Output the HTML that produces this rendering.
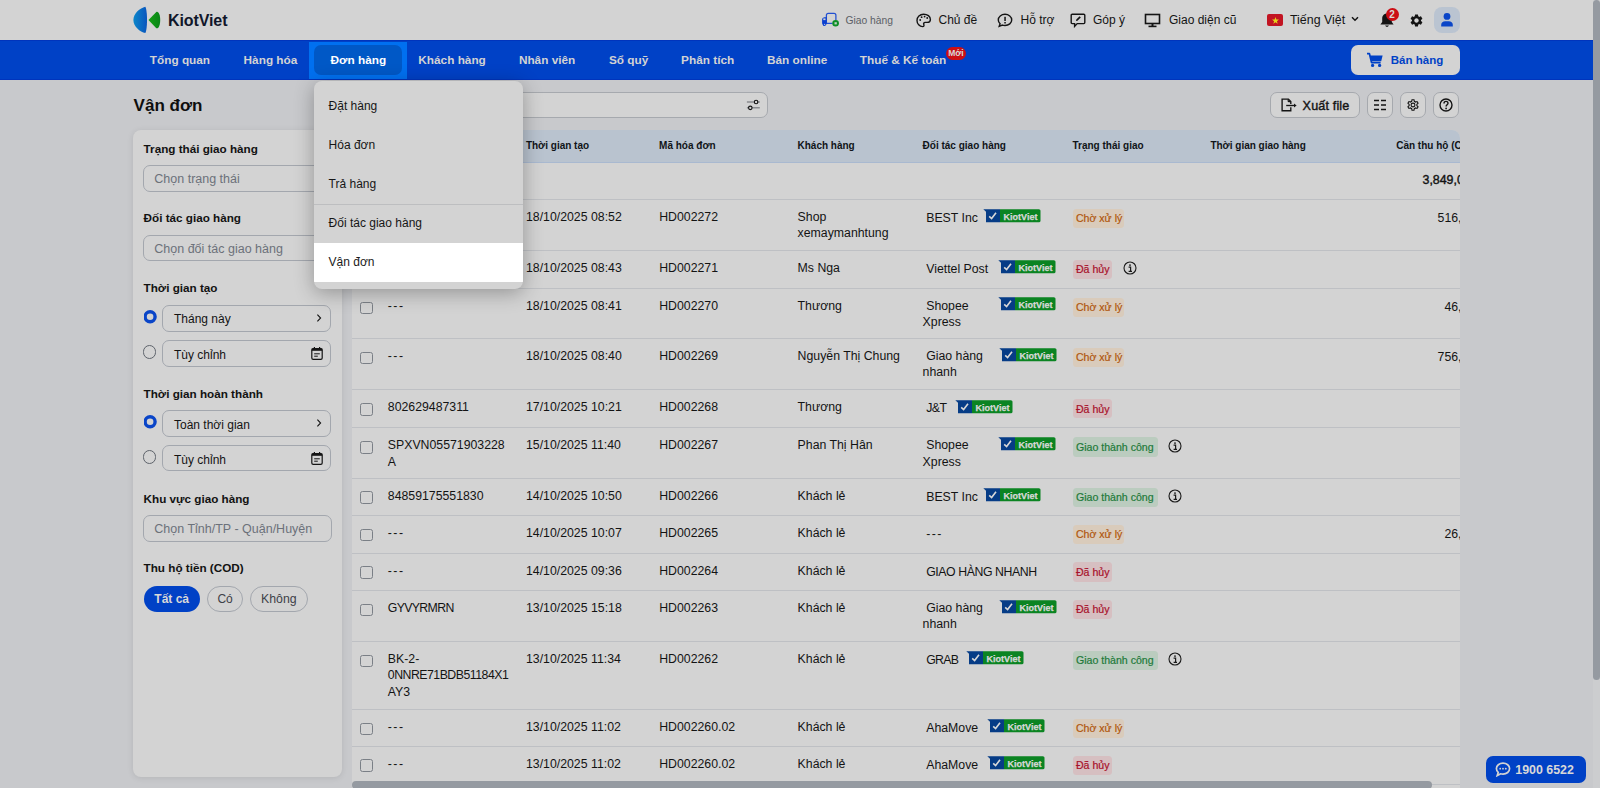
<!DOCTYPE html>
<html lang="vi">
<head>
<meta charset="utf-8">
<title>KiotViet - Vận đơn</title>
<style>
*{box-sizing:border-box;margin:0;padding:0}
html,body{width:1600px;height:788px;overflow:hidden}
body{position:relative;background:#C8C9CC;font-family:"Liberation Sans",sans-serif;color:#141414;font-size:12px}
.abs{position:absolute}
.t{position:absolute;white-space:nowrap;line-height:1}
/* header */
#hdr{position:absolute;left:0;top:0;width:1593px;height:40px;background:#D3D3D3}
#nav{position:absolute;left:0;top:40px;width:1593px;height:40px;background:#0041C6}
.nv{position:absolute;top:55px;font-weight:bold;font-size:11.8px;color:#D3D3D3;white-space:nowrap;line-height:1}
#vscroll{position:absolute;left:1593px;top:0;width:7px;height:788px;background:#CCCDCF}
#vthumb{position:absolute;left:1593px;top:0;width:7px;height:680px;background:#959AA1;border-radius:4px}
</style>
</head>
<body>
<div id="vscroll"></div>
<div id="vthumb"></div>

<!-- HEADER -->
<div id="hdr">
  <svg class="abs" style="left:130px;top:4px" width="34" height="32" viewBox="130 4 34 32">
    <defs><linearGradient id="lgb" x1="0" x2="1" y1="0" y2="0"><stop offset="0" stop-color="#0B86C9"/><stop offset="1" stop-color="#0A55BE"/></linearGradient>
    <linearGradient id="lgg" x1="0" x2="1"><stop offset="0" stop-color="#14A014"/><stop offset="1" stop-color="#0A8418"/></linearGradient></defs>
    <path d="M145.3,6.8 C140,8 133.4,13.5 133.4,20 C133.4,26.5 140,32 145.3,33.1 C147.6,29.5 147.6,10.5 145.3,6.8 Z" fill="url(#lgb)"/>
    <path d="M148.5,20 L156.3,12 C158.6,11 160.2,15 160.2,20 C160.2,25 158.6,29 156.3,28.2 Z" fill="url(#lgg)"/>
  </svg>
  <div class="t" style="left:168px;top:12.8px;font-size:16px;font-weight:bold;color:#10162A;letter-spacing:-0.1px">KiotViet</div>

  <!-- Giao hang -->
  <svg class="abs" style="left:820px;top:12px" width="21" height="16" viewBox="0 0 21 16">
    <path d="M12.5,11.4 L6.4,11.4 L6.4,3.3 Q6.4,1.4 8.3,1.4 L14,1.4 Q15.9,1.4 15.9,3.3 L15.9,8.4" fill="none" stroke="#2250D0" stroke-width="1.25"/>
    <path d="M6.6,5.2 L4.3,5.2 Q2.1,5.5 2.1,7.6 L2.1,11.2 Q2.1,12.2 3.2,12.4 L6.6,12.4 Z" fill="#0A3FD0"/>
    <rect x="3.3" y="6.4" width="2.2" height="1.7" fill="#D3D3D3"/>
    <circle cx="4.3" cy="12.4" r="1.6" fill="#0A3FD0"/><circle cx="4.6" cy="12.3" r="0.6" fill="#D3D3D3"/>
    <circle cx="15.6" cy="11.3" r="3.3" fill="#0E8E26"/>
    <rect x="14.5" y="10.2" width="2.3" height="2.2" fill="#BFD3C2"/>
  </svg>
  <div class="t" style="left:845.5px;top:15.6px;font-size:10.3px;color:#5C5F66">Giao hàng</div>

  <!-- Chu de -->
  <svg class="abs" style="left:916px;top:13px" width="16" height="15" viewBox="0 0 16 15">
    <path d="M7.6,1.2 C3.8,1.2 1,4 1,7.4 C1,10.8 3.6,13.6 6.6,13.6 C8,13.6 8.2,12.6 7.8,11.6 C7.3,10.4 7.8,9.4 9.2,9.4 L11.2,9.4 C13.2,9.4 14.4,8.2 14.4,6.4 C14.4,3.4 11.4,1.2 7.6,1.2 Z" fill="none" stroke="#141414" stroke-width="1.4"/>
    <circle cx="4.2" cy="7" r="0.9" fill="#141414"/><circle cx="5.6" cy="4.2" r="0.9" fill="#141414"/><circle cx="8.6" cy="3.6" r="0.9" fill="#141414"/><circle cx="11.2" cy="5" r="0.9" fill="#141414"/>
  </svg>
  <div class="t" style="left:938.5px;top:14.4px;font-size:12px;color:#141414">Chủ đề</div>

  <!-- Ho tro -->
  <svg class="abs" style="left:997px;top:13px" width="16" height="15" viewBox="0 0 16 15">
    <path d="M8,1.3 C4.2,1.3 1.3,3.8 1.3,6.9 C1.3,8.4 2,9.7 3.1,10.7 L2.2,13.4 L5.4,12.1 C6.2,12.4 7.1,12.5 8,12.5 C11.8,12.5 14.7,10 14.7,6.9 C14.7,3.8 11.8,1.3 8,1.3 Z" fill="none" stroke="#141414" stroke-width="1.4"/>
    <rect x="7.3" y="3.8" width="1.5" height="4.2" fill="#141414"/><rect x="7.3" y="9" width="1.5" height="1.5" fill="#141414"/>
  </svg>
  <div class="t" style="left:1020.5px;top:14.4px;font-size:12px;color:#141414">Hỗ trợ</div>

  <!-- Gop y -->
  <svg class="abs" style="left:1070px;top:13px" width="16" height="15" viewBox="0 0 16 15">
    <path d="M2.2,1.2 L13.8,1.2 Q14.8,1.2 14.8,2.2 L14.8,9.6 Q14.8,10.6 13.8,10.6 L7.2,10.6 L4.6,13.4 L4.6,10.6 L2.2,10.6 Q1.2,10.6 1.2,9.6 L1.2,2.2 Q1.2,1.2 2.2,1.2 Z" fill="none" stroke="#141414" stroke-width="1.4"/>
    <path d="M6,8 L6.3,6.6 L9.6,3.3 L10.8,4.5 L7.5,7.8 Z" fill="#141414"/>
  </svg>
  <div class="t" style="left:1093px;top:14.4px;font-size:12px;color:#141414">Góp ý</div>

  <!-- Giao dien cu -->
  <svg class="abs" style="left:1144px;top:13px" width="17" height="15" viewBox="0 0 17 15">
    <rect x="1.5" y="1.5" width="14" height="9" fill="none" stroke="#141414" stroke-width="1.6"/>
    <rect x="7.5" y="10.5" width="2" height="2.5" fill="#141414"/>
    <rect x="4.5" y="12.6" width="8" height="1.6" fill="#141414"/>
  </svg>
  <div class="t" style="left:1169px;top:14.4px;font-size:12px;color:#141414">Giao diện cũ</div>

  <!-- flag -->
  <div class="abs" style="left:1267px;top:14px;width:16px;height:11.5px;background:#C21422;border-radius:2px"></div>
  <svg class="abs" style="left:1270px;top:14.5px" width="11" height="11" viewBox="0 0 11 11"><path d="M5.5,2 L6.4,4.6 L9,4.6 L6.9,6.2 L7.7,8.8 L5.5,7.2 L3.3,8.8 L4.1,6.2 L2,4.6 L4.6,4.6 Z" fill="#E6D21A"/></svg>
  <div class="t" style="left:1290px;top:14.3px;font-size:12.4px;color:#141414">Tiếng Việt</div>
  <svg class="abs" style="left:1351px;top:16px" width="8" height="6" viewBox="0 0 8 6"><path d="M1,1.2 L4,4.2 L7,1.2" fill="none" stroke="#141414" stroke-width="1.5"/></svg>

  <!-- bell -->
  <svg class="abs" style="left:1379px;top:12px" width="16" height="17" viewBox="0 0 16 17">
    <path d="M8,1.5 C5,1.5 3.2,3.8 3.2,6.6 L3.2,10 L1.4,12.6 L14.6,12.6 L12.8,10 L12.8,6.6 C12.8,3.8 11,1.5 8,1.5 Z" fill="#141414"/>
    <path d="M6,13.6 Q8,16.4 10,13.6 Z" fill="#141414"/>
  </svg>
  <div class="abs" style="left:1385.5px;top:7.8px;width:13px;height:13px;border-radius:50%;background:#CC0E14;color:#D8D8D8;font-size:10px;font-weight:bold;text-align:center;line-height:13px">2</div>

  <!-- gear -->
  <svg class="abs" style="left:1409px;top:12.5px" width="15" height="15" viewBox="0 0 24 24">
    <path fill="#141414" d="M19.14,12.94c0.04-0.3,0.06-0.61,0.06-0.94c0-0.32-0.02-0.64-0.07-0.94l2.03-1.58c0.18-0.14,0.23-0.41,0.12-0.61 l-1.92-3.32c-0.12-0.22-0.37-0.29-0.59-0.22l-2.39,0.96c-0.5-0.38-1.03-0.7-1.62-0.94L14.4,2.81c-0.04-0.24-0.24-0.41-0.48-0.41 h-3.84c-0.24,0-0.43,0.17-0.47,0.41L9.25,5.35C8.66,5.59,8.12,5.92,7.63,6.29L5.24,5.33c-0.22-0.08-0.47,0-0.59,0.22L2.74,8.87 C2.62,9.08,2.66,9.34,2.86,9.48l2.03,1.58C4.84,11.36,4.8,11.69,4.8,12s0.02,0.64,0.07,0.94l-2.03,1.58 c-0.18,0.14-0.23,0.41-0.12,0.61l1.92,3.32c0.12,0.22,0.37,0.29,0.59,0.22l2.39-0.96c0.5,0.38,1.03,0.7,1.62,0.94l0.36,2.54 c0.05,0.24,0.24,0.41,0.48,0.41h3.84c0.24,0,0.44-0.17,0.47-0.41l0.36-2.54c0.59-0.24,1.13-0.56,1.62-0.94l2.39,0.96 c0.22,0.08,0.47,0,0.59-0.22l1.92-3.32c0.12-0.22,0.07-0.47-0.12-0.61L19.14,12.94z M12,15.6c-1.98,0-3.6-1.62-3.6-3.6 s1.62-3.6,3.6-3.6s3.6,1.62,3.6,3.6S13.98,15.6,12,15.6z"/>
  </svg>

  <!-- avatar -->
  <div class="abs" style="left:1433.5px;top:6.5px;width:26.5px;height:26.5px;border-radius:8px;background:#BAC4D1"></div>
  <svg class="abs" style="left:1439px;top:12px" width="16" height="16" viewBox="0 0 16 16">
    <circle cx="8" cy="4.4" r="3.4" fill="#0A45C8"/>
    <path d="M2.2,14.6 L2.2,12.8 C2.2,10.6 4,9.2 6.2,9.2 L9.8,9.2 C12,9.2 13.8,10.6 13.8,12.8 L13.8,14.6 Z" fill="#0A45C8"/>
  </svg>
</div>

<!-- NAV -->
<div id="nav"></div>
<div class="abs" style="left:0;top:40px;width:1593px;height:1px;background:#0034BC"></div>
<div class="abs" style="left:0;top:79px;width:1593px;height:1px;background:#0034BC"></div>
<div class="abs" style="left:309px;top:42px;width:98px;height:37px;background:#0070F0"></div>
<div class="abs" style="left:314px;top:45px;width:88px;height:30px;background:#0058C6;border-radius:7px"></div>
<div class="nv" style="left:149.79999999999998px">Tổng quan</div>
<div class="nv" style="left:243.6px">Hàng hóa</div>
<div class="nv" style="left:418.3px">Khách hàng</div>
<div class="nv" style="left:518.9px">Nhân viên</div>
<div class="nv" style="left:608.9px">Sổ quỹ</div>
<div class="nv" style="left:681.1px">Phân tích</div>
<div class="nv" style="left:767.0px">Bán online</div>
<div class="nv" style="left:859.8000000000001px">Thuế &amp; Kế toán</div>
<div class="nv" style="left:330.6px;color:#FFFFFF">Đơn hàng</div>
<div class="abs" style="left:946px;top:46.5px;width:20px;height:13.5px;border-radius:7px;background:#CC0E14;color:#D8D8D8;font-size:8.5px;font-weight:bold;text-align:center;line-height:13.5px">Mới</div>
<div class="abs" style="left:1351px;top:45px;width:109px;height:30px;border-radius:7px;background:#D3D3D3"></div>
<svg class="abs" style="left:1366px;top:52px" width="18" height="16" viewBox="0 0 18 16">
<path d="M1,1.6 L3.4,1.6 L5.6,10.6 L14.6,10.6" fill="none" stroke="#0041C6" stroke-width="1.8" stroke-linejoin="round"/>
<path d="M4.2,3.6 L16.6,3.6 L15.2,9.2 L5.4,9.2 Z" fill="#0041C6"/>
<circle cx="6.6" cy="13.4" r="1.6" fill="#0041C6"/><circle cx="13.6" cy="13.4" r="1.6" fill="#0041C6"/>
</svg>
<div class="nv" style="left:1390.8px;color:#0041C6;font-size:11.5px">Bán hàng</div>

<!-- TITLE -->
<div class="t" style="left:133.6px;top:96.9px;font-size:17px;font-weight:bold;color:#0E0E0E">Vận đơn</div>

<!-- SEARCH -->
<div class="abs" style="left:352px;top:92px;width:416px;height:26px;border:1px solid #A6A9AE;border-radius:7px;background:#D3D3D3"></div>
<svg class="abs" style="left:745px;top:98px" width="16" height="14" viewBox="0 0 16 14">
<path d="M1.9,4 L14.8,4 M1.9,9.8 L14.8,9.8" stroke="#8A8C90" stroke-width="1.4"/>
<circle cx="11.1" cy="4" r="1.75" fill="#D3D3D3" stroke="#141414" stroke-width="1.15"/>
<circle cx="5.3" cy="9.8" r="1.75" fill="#D3D3D3" stroke="#141414" stroke-width="1.15"/>
</svg>

<!-- TOOLBAR -->
<div class="abs" style="left:1270px;top:92px;width:90px;height:26px;border:1px solid #A6A9AE;border-radius:7px;background:#D3D3D3"></div>
<svg class="abs" style="left:1280px;top:97px" width="18" height="16" viewBox="0 0 18 16">
<path d="M10.8,7 L10.8,4.6 L8.4,2.1 L2.1,2.1 L2.1,13.7 L10.8,13.7 L10.8,10.2" fill="none" stroke="#141414" stroke-width="1.35"/>
<path d="M8.2,2.3 L8.2,3.9 Q8.2,4.6 8.9,4.6 L10.6,4.6" fill="none" stroke="#141414" stroke-width="1.2"/>
<path d="M6.2,8.5 L14.6,8.5" fill="none" stroke="#141414" stroke-width="1.35"/>
<path d="M14,6.5 L16.6,8.5 L14,10.5 Z" fill="#141414"/>
</svg>
<div class="t" style="left:1302.6px;top:99.6px;font-size:12.6px;letter-spacing:0.15px;color:#141414;-webkit-text-stroke:0.4px #141414">Xuất file</div>
<div class="abs" style="left:1367px;top:92px;width:26px;height:26px;border:1px solid #A6A9AE;border-radius:7px;background:#D3D3D3"></div>
<svg class="abs" style="left:1373px;top:98px" width="14" height="14" viewBox="0 0 14 14">
<path d="M1,2.5 L6,2.5 M8,2.5 L13,2.5 M1,7 L6,7 M8,7 L13,7 M1,11.5 L6,11.5 M8,11.5 L13,11.5" stroke="#141414" stroke-width="1.4"/>
</svg>
<div class="abs" style="left:1400px;top:92px;width:26px;height:26px;border:1px solid #A6A9AE;border-radius:7px;background:#D3D3D3"></div>
<svg class="abs" style="left:1406px;top:98px" width="14" height="14" viewBox="0 0 24 24">
<path fill="none" stroke="#141414" stroke-width="1.9" d="M10.3,2.5 L13.7,2.5 L14.3,5.3 C15,5.6 15.7,6 16.3,6.5 L19,5.6 L20.7,8.5 L18.6,10.4 C18.7,11.1 18.7,11.9 18.6,12.6 L20.7,14.5 L19,17.4 L16.3,16.5 C15.7,17 15,17.4 14.3,17.7 L13.7,20.5 L10.3,20.5 L9.7,17.7 C9,17.4 8.3,17 7.7,16.5 L5,17.4 L3.3,14.5 L5.4,12.6 C5.3,11.9 5.3,11.1 5.4,10.4 L3.3,8.5 L5,5.6 L7.7,6.5 C8.3,6 9,5.6 9.7,5.3 Z" transform="translate(0,0.5)"/>
<circle cx="12" cy="12" r="3.3" fill="none" stroke="#141414" stroke-width="1.9"/>
</svg>
<div class="abs" style="left:1433px;top:92px;width:26px;height:26px;border:1px solid #A6A9AE;border-radius:7px;background:#D3D3D3"></div>
<svg class="abs" style="left:1439px;top:98px" width="14" height="14" viewBox="0 0 14 14">
<circle cx="7" cy="7" r="6" fill="none" stroke="#141414" stroke-width="1.4"/>
<path d="M5,5.4 C5,4.1 5.9,3.4 7,3.4 C8.1,3.4 9,4.1 9,5.2 C9,6.6 7.1,6.8 7.1,8.4" fill="none" stroke="#141414" stroke-width="1.4"/>
<circle cx="7.1" cy="10.4" r="0.85" fill="#141414"/>
</svg>

<!-- SIDEBAR -->
<div class="abs" style="left:133px;top:130px;width:209px;height:647px;background:#D3D3D3;border-radius:8px;box-shadow:0 1px 6px rgba(0,0,0,0.10)"></div>
<div class="t" style="left:143.6px;top:143.1px;font-size:11.7px;font-weight:bold;color:#121212">Trạng thái giao hàng</div>
<div class="t" style="left:143.6px;top:212.4px;font-size:11.7px;font-weight:bold;color:#121212">Đối tác giao hàng</div>
<div class="t" style="left:143.6px;top:282.4px;font-size:11.7px;font-weight:bold;color:#121212">Thời gian tạo</div>
<div class="t" style="left:143.6px;top:387.9px;font-size:11.7px;font-weight:bold;color:#121212">Thời gian hoàn thành</div>
<div class="t" style="left:143.6px;top:493.1px;font-size:11.7px;font-weight:bold;color:#121212">Khu vực giao hàng</div>
<div class="t" style="left:143.6px;top:562.0px;font-size:11.7px;font-weight:bold;color:#121212">Thu hộ tiền (COD)</div>
<div class="abs" style="left:143px;top:165px;width:189px;height:26.6px;border:1px solid #A3A7AE;border-radius:7px;background:#D3D3D3"></div>
<div class="t" style="left:154.3px;top:173.19px;font-size:12.5px;color:#6C717A">Chọn trạng thái</div>
<div class="abs" style="left:143px;top:235px;width:189px;height:26.4px;border:1px solid #A3A7AE;border-radius:7px;background:#D3D3D3"></div>
<div class="t" style="left:154.3px;top:242.69px;font-size:12.5px;color:#6C717A">Chọn đối tác giao hàng</div>
<div class="abs" style="left:143px;top:515.3px;width:189px;height:26.3px;border:1px solid #A3A7AE;border-radius:7px;background:#D3D3D3"></div>
<div class="t" style="left:154.3px;top:523.09px;font-size:12.5px;color:#6C717A">Chọn Tỉnh/TP - Quận/Huyện</div>
<svg class="abs" style="left:143.5px;top:310.15px" width="14" height="14" viewBox="0 0 14 14"><circle cx="6.1" cy="6.8" r="5.0" fill="#D3D3D3" stroke="#0A45C8" stroke-width="3.4"/></svg>
<div class="abs" style="left:162.4px;top:305px;width:169px;height:26.5px;border:1px solid #A3A7AE;border-radius:7px;background:#D3D3D3"></div>
<div class="t" style="left:174px;top:313.34px;font-size:12px;color:#141414">Tháng này</div>
<svg class="abs" style="left:315px;top:313.1px" width="8" height="10" viewBox="0 0 8 10"><path d="M2.4,1.6 L5.6,5 L2.4,8.4" fill="none" stroke="#141414" stroke-width="1.1"/></svg>
<div class="abs" style="left:142.8px;top:345.45px;width:13.6px;height:13.6px;border-radius:50%;border:1.2px solid #5E636B;background:#D3D3D3"></div>
<div class="abs" style="left:162.4px;top:340.4px;width:169px;height:26.3px;border:1px solid #A3A7AE;border-radius:7px;background:#D3D3D3"></div>
<div class="t" style="left:174px;top:348.84px;font-size:12px;color:#141414">Tùy chỉnh</div>
<svg class="abs" style="left:310px;top:345.7px" width="14" height="15" viewBox="0 0 14 15"><rect x="1.8" y="2.6" width="10.4" height="10.8" rx="1.4" fill="none" stroke="#141414" stroke-width="1.2"/><rect x="1.8" y="2.6" width="10.4" height="2.2" fill="#141414"/><path d="M4.4,0.9 L4.4,3.2 M9.6,0.9 L9.6,3.2" stroke="#141414" stroke-width="1.2"/><path d="M4.2,7.8 L9.8,7.8 M4.2,10.2 L7.8,10.2" stroke="#141414" stroke-width="1"/></svg>
<svg class="abs" style="left:143.5px;top:415.45px" width="14" height="14" viewBox="0 0 14 14"><circle cx="6.1" cy="6.8" r="5.0" fill="#D3D3D3" stroke="#0A45C8" stroke-width="3.4"/></svg>
<div class="abs" style="left:162.4px;top:410.4px;width:169px;height:26.3px;border:1px solid #A3A7AE;border-radius:7px;background:#D3D3D3"></div>
<div class="t" style="left:174px;top:418.64px;font-size:12px;color:#141414">Toàn thời gian</div>
<svg class="abs" style="left:315px;top:418.3px" width="8" height="10" viewBox="0 0 8 10"><path d="M2.4,1.6 L5.6,5 L2.4,8.4" fill="none" stroke="#141414" stroke-width="1.1"/></svg>
<div class="abs" style="left:142.8px;top:450.25px;width:13.6px;height:13.6px;border-radius:50%;border:1.2px solid #5E636B;background:#D3D3D3"></div>
<div class="abs" style="left:162.4px;top:445.3px;width:169px;height:26.1px;border:1px solid #A3A7AE;border-radius:7px;background:#D3D3D3"></div>
<div class="t" style="left:174px;top:453.84px;font-size:12px;color:#141414">Tùy chỉnh</div>
<svg class="abs" style="left:310px;top:450.6px" width="14" height="15" viewBox="0 0 14 15"><rect x="1.8" y="2.6" width="10.4" height="10.8" rx="1.4" fill="none" stroke="#141414" stroke-width="1.2"/><rect x="1.8" y="2.6" width="10.4" height="2.2" fill="#141414"/><path d="M4.4,0.9 L4.4,3.2 M9.6,0.9 L9.6,3.2" stroke="#141414" stroke-width="1.2"/><path d="M4.2,7.8 L9.8,7.8 M4.2,10.2 L7.8,10.2" stroke="#141414" stroke-width="1"/></svg>
<div class="abs" style="left:143.5px;top:585.8px;width:56.5px;height:26px;border-radius:13px;background:#0041C6"></div>
<div class="t" style="left:154.3px;top:592.74px;font-size:12px;font-weight:bold;color:#D8D8D8">Tất cả</div>
<div class="abs" style="left:206.9px;top:585.8px;width:36px;height:26px;border-radius:13px;border:1px solid #A3A7AE"></div>
<div class="t" style="left:217.4px;top:592.74px;font-size:12px;color:#3E4148">Có</div>
<div class="abs" style="left:250.3px;top:585.8px;width:57.7px;height:26px;border-radius:13px;border:1px solid #A3A7AE"></div>
<div class="t" style="left:261px;top:593.49px;font-size:12.3px;color:#3E4148">Không</div>

<!-- TABLE -->
<div class="abs" style="left:352px;top:130px;width:1108px;height:658px;background:#D3D3D3;border-radius:8px 8px 0 0;overflow:hidden">
<div class="abs" style="left:0;top:0;width:1108px;height:33px;background:#B9C3CF;border-bottom:1px solid #A9B9D0"></div>
</div>
<div class="t" style="left:387.7px;top:140.53px;font-size:10px;font-weight:bold;color:#101418">Mã vận đơn</div>
<div class="t" style="left:525.9000000000001px;top:140.53px;font-size:10px;font-weight:bold;color:#101418">Thời gian tạo</div>
<div class="t" style="left:659.1px;top:140.53px;font-size:10px;font-weight:bold;color:#101418">Mã hóa đơn</div>
<div class="t" style="left:797.5px;top:140.53px;font-size:10px;font-weight:bold;color:#101418">Khách hàng</div>
<div class="t" style="left:922.6px;top:140.53px;font-size:10px;font-weight:bold;color:#101418">Đối tác giao hàng</div>
<div class="t" style="left:1072.5px;top:140.53px;font-size:10px;font-weight:bold;color:#101418">Trạng thái giao</div>
<div class="t" style="left:1210.4px;top:140.53px;font-size:10px;font-weight:bold;color:#101418">Thời gian giao hàng</div>
<div class="t" style="left:1396.2px;top:140.53px;font-size:10px;font-weight:bold;color:#101418">Cần thu hộ (COD)</div>
<div class="abs" style="left:359.8px;top:140px;width:12.8px;height:12.8px;border:1px solid #6E737B;border-radius:2.5px"></div>
<div class="t" style="left:1422.5px;top:173.7px;font-size:12.4px;color:#131313;-webkit-text-stroke:0.4px #131313">3,849,000</div>
<div class="abs" style="left:352px;top:198.75px;width:1108px;height:1px;background:#BEC0C4"></div>
<div class="abs" style="left:352px;top:250.0px;width:1108px;height:1px;background:#BEC0C4"></div>
<div class="abs" style="left:352px;top:287.8px;width:1108px;height:1px;background:#BEC0C4"></div>
<div class="abs" style="left:352px;top:337.8px;width:1108px;height:1px;background:#BEC0C4"></div>
<div class="abs" style="left:352px;top:389.2px;width:1108px;height:1px;background:#BEC0C4"></div>
<div class="abs" style="left:352px;top:427.3px;width:1108px;height:1px;background:#BEC0C4"></div>
<div class="abs" style="left:352px;top:477.7px;width:1108px;height:1px;background:#BEC0C4"></div>
<div class="abs" style="left:352px;top:514.9px;width:1108px;height:1px;background:#BEC0C4"></div>
<div class="abs" style="left:352px;top:552.5px;width:1108px;height:1px;background:#BEC0C4"></div>
<div class="abs" style="left:352px;top:590.0px;width:1108px;height:1px;background:#BEC0C4"></div>
<div class="abs" style="left:352px;top:640.8px;width:1108px;height:1px;background:#BEC0C4"></div>
<div class="abs" style="left:352px;top:709.0px;width:1108px;height:1px;background:#BEC0C4"></div>
<div class="abs" style="left:352px;top:745.7px;width:1108px;height:1px;background:#BEC0C4"></div>
<div class="abs" style="left:352px;top:783.7px;width:1108px;height:1px;background:#BEC0C4"></div>
<div class="t" style="left:526px;top:210.84px;font-size:12.3px;color:#131313">18/10/2025 08:52</div>
<div class="t" style="left:659.2px;top:210.84px;font-size:12.3px;color:#131313">HD002272</div>
<div class="t" style="left:797.6px;top:210.84px;font-size:12.3px;color:#131313">Shop</div>
<div class="t" style="left:797.6px;top:227.24px;font-size:12.3px;color:#131313">xemaymanhtung</div>
<div class="t" style="left:926.2px;top:211.84px;font-size:12.3px;color:#131313">BEST Inc</div>
<svg class="abs" style="left:983.3px;top:209.04999999999998px" width="58" height="14" viewBox="0 0 58 14"><path d="M0.3,0.2 L17,0.2 L17,13.3 L3,13.3 L3,2.8 Z" fill="#063C86"/><path d="M17,0.2 L55.8,0.2 Q57.5,0.2 57.5,1.8 L57.5,11.7 Q57.5,13.3 55.8,13.3 L17,13.3 Z" fill="#0B8422"/><path d="M6.2,7.4 L8.6,9.6 L13,3.8" fill="none" stroke="#D8D8D8" stroke-width="1.6"/><text x="20.6" y="10.6" font-family="Liberation Sans" font-weight="bold" font-size="9" fill="#D8D8D8" stroke="#D8D8D8" stroke-width="0.25">KiotViet</text></svg>
<div class="abs" style="left:1072.7px;top:208.65px;width:51px;height:19.4px;border-radius:3.5px;background:#D9CBBB"></div>
<div class="t" style="left:1075.9px;top:213.18px;font-size:10.6px;color:#B0560C;-webkit-text-stroke:0.2px #B0560C">Chờ xử lý</div>
<div class="t" style="left:auto;right:118px;top:211.54px;font-size:12.3px;color:#131313">516,000</div>
<div class="t" style="left:526px;top:262.09px;font-size:12.3px;color:#131313">18/10/2025 08:43</div>
<div class="t" style="left:659.2px;top:262.09px;font-size:12.3px;color:#131313">HD002271</div>
<div class="t" style="left:797.6px;top:262.09px;font-size:12.3px;color:#131313">Ms Nga</div>
<div class="t" style="left:926.2px;top:263.09px;font-size:12.3px;color:#131313">Viettel Post</div>
<svg class="abs" style="left:998.0px;top:260.3px" width="58" height="14" viewBox="0 0 58 14"><path d="M0.3,0.2 L17,0.2 L17,13.3 L3,13.3 L3,2.8 Z" fill="#063C86"/><path d="M17,0.2 L55.8,0.2 Q57.5,0.2 57.5,1.8 L57.5,11.7 Q57.5,13.3 55.8,13.3 L17,13.3 Z" fill="#0B8422"/><path d="M6.2,7.4 L8.6,9.6 L13,3.8" fill="none" stroke="#D8D8D8" stroke-width="1.6"/><text x="20.6" y="10.6" font-family="Liberation Sans" font-weight="bold" font-size="9" fill="#D8D8D8" stroke="#D8D8D8" stroke-width="0.25">KiotViet</text></svg>
<div class="abs" style="left:1072.7px;top:259.9px;width:39.3px;height:19.4px;border-radius:3.5px;background:#D6BFC1"></div>
<div class="t" style="left:1075.9px;top:264.43px;font-size:10.6px;color:#A8112A;-webkit-text-stroke:0.2px #A8112A">Đã hủy</div>
<svg class="abs" style="left:1122.7px;top:261.2px" width="15" height="15" viewBox="0 0 15 15"><circle cx="7" cy="7" r="6" fill="none" stroke="#1A1A1A" stroke-width="1.1"/><circle cx="7" cy="4.1" r="0.9" fill="#1A1A1A"/><path d="M5.6,6.1 L7.6,6.1 L7.6,10.2 M5.6,10.4 L9,10.4" fill="none" stroke="#1A1A1A" stroke-width="1.2"/></svg>
<div class="abs" style="left:359.8px;top:301.5px;width:12.8px;height:12.8px;border:1px solid #7A7F86;border-radius:2.5px"></div>
<div class="t" style="left:387.8px;top:299.89px;font-size:12.3px;color:#131313;letter-spacing:1.45px">---</div>
<div class="t" style="left:526px;top:299.89px;font-size:12.3px;color:#131313">18/10/2025 08:41</div>
<div class="t" style="left:659.2px;top:299.89px;font-size:12.3px;color:#131313">HD002270</div>
<div class="t" style="left:797.6px;top:299.89px;font-size:12.3px;color:#131313">Thương</div>
<div class="t" style="left:926.2px;top:299.89px;font-size:12.3px;color:#131313">Shopee</div>
<div class="t" style="left:922.6px;top:316.29px;font-size:12.3px;color:#131313">Xpress</div>
<svg class="abs" style="left:997.7px;top:297.1px" width="58" height="14" viewBox="0 0 58 14"><path d="M0.3,0.2 L17,0.2 L17,13.3 L3,13.3 L3,2.8 Z" fill="#063C86"/><path d="M17,0.2 L55.8,0.2 Q57.5,0.2 57.5,1.8 L57.5,11.7 Q57.5,13.3 55.8,13.3 L17,13.3 Z" fill="#0B8422"/><path d="M6.2,7.4 L8.6,9.6 L13,3.8" fill="none" stroke="#D8D8D8" stroke-width="1.6"/><text x="20.6" y="10.6" font-family="Liberation Sans" font-weight="bold" font-size="9" fill="#D8D8D8" stroke="#D8D8D8" stroke-width="0.25">KiotViet</text></svg>
<div class="abs" style="left:1072.7px;top:297.7px;width:51px;height:19.4px;border-radius:3.5px;background:#D9CBBB"></div>
<div class="t" style="left:1075.9px;top:302.23px;font-size:10.6px;color:#B0560C;-webkit-text-stroke:0.2px #B0560C">Chờ xử lý</div>
<div class="t" style="left:auto;right:118px;top:300.59px;font-size:12.3px;color:#131313">46,000</div>
<div class="abs" style="left:359.8px;top:351.5px;width:12.8px;height:12.8px;border:1px solid #7A7F86;border-radius:2.5px"></div>
<div class="t" style="left:387.8px;top:349.89px;font-size:12.3px;color:#131313;letter-spacing:1.45px">---</div>
<div class="t" style="left:526px;top:349.89px;font-size:12.3px;color:#131313">18/10/2025 08:40</div>
<div class="t" style="left:659.2px;top:349.89px;font-size:12.3px;color:#131313">HD002269</div>
<div class="t" style="left:797.6px;top:349.89px;font-size:12.3px;color:#131313">Nguyễn Thị Chung</div>
<div class="t" style="left:926.2px;top:349.89px;font-size:12.3px;color:#131313">Giao hàng</div>
<div class="t" style="left:922.6px;top:366.29px;font-size:12.3px;color:#131313">nhanh</div>
<svg class="abs" style="left:999.2px;top:348.1px" width="58" height="14" viewBox="0 0 58 14"><path d="M0.3,0.2 L17,0.2 L17,13.3 L3,13.3 L3,2.8 Z" fill="#063C86"/><path d="M17,0.2 L55.8,0.2 Q57.5,0.2 57.5,1.8 L57.5,11.7 Q57.5,13.3 55.8,13.3 L17,13.3 Z" fill="#0B8422"/><path d="M6.2,7.4 L8.6,9.6 L13,3.8" fill="none" stroke="#D8D8D8" stroke-width="1.6"/><text x="20.6" y="10.6" font-family="Liberation Sans" font-weight="bold" font-size="9" fill="#D8D8D8" stroke="#D8D8D8" stroke-width="0.25">KiotViet</text></svg>
<div class="abs" style="left:1072.7px;top:347.7px;width:51px;height:19.4px;border-radius:3.5px;background:#D9CBBB"></div>
<div class="t" style="left:1075.9px;top:352.23px;font-size:10.6px;color:#B0560C;-webkit-text-stroke:0.2px #B0560C">Chờ xử lý</div>
<div class="t" style="left:auto;right:118px;top:350.59px;font-size:12.3px;color:#131313">756,000</div>
<div class="abs" style="left:359.8px;top:402.9px;width:12.8px;height:12.8px;border:1px solid #7A7F86;border-radius:2.5px"></div>
<div class="t" style="left:387.8px;top:401.29px;font-size:12.3px;color:#131313">802629487311</div>
<div class="t" style="left:526px;top:401.29px;font-size:12.3px;color:#131313">17/10/2025 10:21</div>
<div class="t" style="left:659.2px;top:401.29px;font-size:12.3px;color:#131313">HD002268</div>
<div class="t" style="left:797.6px;top:401.29px;font-size:12.3px;color:#131313">Thương</div>
<div class="t" style="left:926.2px;top:402.29px;font-size:12.3px;color:#131313;letter-spacing:-0.5px">J&amp;T</div>
<svg class="abs" style="left:954.8px;top:399.5px" width="58" height="14" viewBox="0 0 58 14"><path d="M0.3,0.2 L17,0.2 L17,13.3 L3,13.3 L3,2.8 Z" fill="#063C86"/><path d="M17,0.2 L55.8,0.2 Q57.5,0.2 57.5,1.8 L57.5,11.7 Q57.5,13.3 55.8,13.3 L17,13.3 Z" fill="#0B8422"/><path d="M6.2,7.4 L8.6,9.6 L13,3.8" fill="none" stroke="#D8D8D8" stroke-width="1.6"/><text x="20.6" y="10.6" font-family="Liberation Sans" font-weight="bold" font-size="9" fill="#D8D8D8" stroke="#D8D8D8" stroke-width="0.25">KiotViet</text></svg>
<div class="abs" style="left:1072.7px;top:399.09999999999997px;width:39.3px;height:19.4px;border-radius:3.5px;background:#D6BFC1"></div>
<div class="t" style="left:1075.9px;top:403.63px;font-size:10.6px;color:#A8112A;-webkit-text-stroke:0.2px #A8112A">Đã hủy</div>
<div class="abs" style="left:359.8px;top:441.0px;width:12.8px;height:12.8px;border:1px solid #7A7F86;border-radius:2.5px"></div>
<div class="t" style="left:387.8px;top:439.39px;font-size:12.3px;color:#131313">SPXVN05571903228</div>
<div class="t" style="left:387.8px;top:455.79px;font-size:12.3px;color:#131313">A</div>
<div class="t" style="left:526px;top:439.39px;font-size:12.3px;color:#131313">15/10/2025 11:40</div>
<div class="t" style="left:659.2px;top:439.39px;font-size:12.3px;color:#131313">HD002267</div>
<div class="t" style="left:797.6px;top:439.39px;font-size:12.3px;color:#131313">Phan Thị Hân</div>
<div class="t" style="left:926.2px;top:439.39px;font-size:12.3px;color:#131313">Shopee</div>
<div class="t" style="left:922.6px;top:455.79px;font-size:12.3px;color:#131313">Xpress</div>
<svg class="abs" style="left:997.7px;top:436.6px" width="58" height="14" viewBox="0 0 58 14"><path d="M0.3,0.2 L17,0.2 L17,13.3 L3,13.3 L3,2.8 Z" fill="#063C86"/><path d="M17,0.2 L55.8,0.2 Q57.5,0.2 57.5,1.8 L57.5,11.7 Q57.5,13.3 55.8,13.3 L17,13.3 Z" fill="#0B8422"/><path d="M6.2,7.4 L8.6,9.6 L13,3.8" fill="none" stroke="#D8D8D8" stroke-width="1.6"/><text x="20.6" y="10.6" font-family="Liberation Sans" font-weight="bold" font-size="9" fill="#D8D8D8" stroke="#D8D8D8" stroke-width="0.25">KiotViet</text></svg>
<div class="abs" style="left:1072.7px;top:437.2px;width:85px;height:19.4px;border-radius:3.5px;background:#BBCCBF"></div>
<div class="t" style="left:1075.9px;top:441.73px;font-size:10.6px;color:#1D7A3A;-webkit-text-stroke:0.2px #1D7A3A">Giao thành công</div>
<svg class="abs" style="left:1168.4px;top:438.5px" width="15" height="15" viewBox="0 0 15 15"><circle cx="7" cy="7" r="6" fill="none" stroke="#1A1A1A" stroke-width="1.1"/><circle cx="7" cy="4.1" r="0.9" fill="#1A1A1A"/><path d="M5.6,6.1 L7.6,6.1 L7.6,10.2 M5.6,10.4 L9,10.4" fill="none" stroke="#1A1A1A" stroke-width="1.2"/></svg>
<div class="abs" style="left:359.8px;top:491.4px;width:12.8px;height:12.8px;border:1px solid #7A7F86;border-radius:2.5px"></div>
<div class="t" style="left:387.8px;top:489.79px;font-size:12.3px;color:#131313">84859175551830</div>
<div class="t" style="left:526px;top:489.79px;font-size:12.3px;color:#131313">14/10/2025 10:50</div>
<div class="t" style="left:659.2px;top:489.79px;font-size:12.3px;color:#131313">HD002266</div>
<div class="t" style="left:797.6px;top:489.79px;font-size:12.3px;color:#131313">Khách lẻ</div>
<div class="t" style="left:926.2px;top:490.79px;font-size:12.3px;color:#131313">BEST Inc</div>
<svg class="abs" style="left:983.3px;top:488.0px" width="58" height="14" viewBox="0 0 58 14"><path d="M0.3,0.2 L17,0.2 L17,13.3 L3,13.3 L3,2.8 Z" fill="#063C86"/><path d="M17,0.2 L55.8,0.2 Q57.5,0.2 57.5,1.8 L57.5,11.7 Q57.5,13.3 55.8,13.3 L17,13.3 Z" fill="#0B8422"/><path d="M6.2,7.4 L8.6,9.6 L13,3.8" fill="none" stroke="#D8D8D8" stroke-width="1.6"/><text x="20.6" y="10.6" font-family="Liberation Sans" font-weight="bold" font-size="9" fill="#D8D8D8" stroke="#D8D8D8" stroke-width="0.25">KiotViet</text></svg>
<div class="abs" style="left:1072.7px;top:487.59999999999997px;width:85px;height:19.4px;border-radius:3.5px;background:#BBCCBF"></div>
<div class="t" style="left:1075.9px;top:492.13px;font-size:10.6px;color:#1D7A3A;-webkit-text-stroke:0.2px #1D7A3A">Giao thành công</div>
<svg class="abs" style="left:1168.4px;top:488.9px" width="15" height="15" viewBox="0 0 15 15"><circle cx="7" cy="7" r="6" fill="none" stroke="#1A1A1A" stroke-width="1.1"/><circle cx="7" cy="4.1" r="0.9" fill="#1A1A1A"/><path d="M5.6,6.1 L7.6,6.1 L7.6,10.2 M5.6,10.4 L9,10.4" fill="none" stroke="#1A1A1A" stroke-width="1.2"/></svg>
<div class="abs" style="left:359.8px;top:528.6px;width:12.8px;height:12.8px;border:1px solid #7A7F86;border-radius:2.5px"></div>
<div class="t" style="left:387.8px;top:526.99px;font-size:12.3px;color:#131313;letter-spacing:1.45px">---</div>
<div class="t" style="left:526px;top:526.99px;font-size:12.3px;color:#131313">14/10/2025 10:07</div>
<div class="t" style="left:659.2px;top:526.99px;font-size:12.3px;color:#131313">HD002265</div>
<div class="t" style="left:797.6px;top:526.99px;font-size:12.3px;color:#131313">Khách lẻ</div>
<div class="t" style="left:926.2px;top:527.99px;font-size:12.3px;color:#131313;letter-spacing:1.45px">---</div>
<div class="abs" style="left:1072.7px;top:524.8px;width:51px;height:19.4px;border-radius:3.5px;background:#D9CBBB"></div>
<div class="t" style="left:1075.9px;top:529.33px;font-size:10.6px;color:#B0560C;-webkit-text-stroke:0.2px #B0560C">Chờ xử lý</div>
<div class="t" style="left:auto;right:118px;top:527.69px;font-size:12.3px;color:#131313">26,000</div>
<div class="abs" style="left:359.8px;top:566.2px;width:12.8px;height:12.8px;border:1px solid #7A7F86;border-radius:2.5px"></div>
<div class="t" style="left:387.8px;top:564.59px;font-size:12.3px;color:#131313;letter-spacing:1.45px">---</div>
<div class="t" style="left:526px;top:564.59px;font-size:12.3px;color:#131313">14/10/2025 09:36</div>
<div class="t" style="left:659.2px;top:564.59px;font-size:12.3px;color:#131313">HD002264</div>
<div class="t" style="left:797.6px;top:564.59px;font-size:12.3px;color:#131313">Khách lẻ</div>
<div class="t" style="left:926.2px;top:565.59px;font-size:12.3px;color:#131313;letter-spacing:-0.42px">GIAO HÀNG NHANH</div>
<div class="abs" style="left:1072.7px;top:562.4px;width:39.3px;height:19.4px;border-radius:3.5px;background:#D6BFC1"></div>
<div class="t" style="left:1075.9px;top:566.93px;font-size:10.6px;color:#A8112A;-webkit-text-stroke:0.2px #A8112A">Đã hủy</div>
<div class="abs" style="left:359.8px;top:603.7px;width:12.8px;height:12.8px;border:1px solid #7A7F86;border-radius:2.5px"></div>
<div class="t" style="left:387.8px;top:602.09px;font-size:12.3px;color:#131313;letter-spacing:-0.65px">GYVYRMRN</div>
<div class="t" style="left:526px;top:602.09px;font-size:12.3px;color:#131313">13/10/2025 15:18</div>
<div class="t" style="left:659.2px;top:602.09px;font-size:12.3px;color:#131313">HD002263</div>
<div class="t" style="left:797.6px;top:602.09px;font-size:12.3px;color:#131313">Khách lẻ</div>
<div class="t" style="left:926.2px;top:602.09px;font-size:12.3px;color:#131313">Giao hàng</div>
<div class="t" style="left:922.6px;top:618.49px;font-size:12.3px;color:#131313">nhanh</div>
<svg class="abs" style="left:999.2px;top:600.3000000000001px" width="58" height="14" viewBox="0 0 58 14"><path d="M0.3,0.2 L17,0.2 L17,13.3 L3,13.3 L3,2.8 Z" fill="#063C86"/><path d="M17,0.2 L55.8,0.2 Q57.5,0.2 57.5,1.8 L57.5,11.7 Q57.5,13.3 55.8,13.3 L17,13.3 Z" fill="#0B8422"/><path d="M6.2,7.4 L8.6,9.6 L13,3.8" fill="none" stroke="#D8D8D8" stroke-width="1.6"/><text x="20.6" y="10.6" font-family="Liberation Sans" font-weight="bold" font-size="9" fill="#D8D8D8" stroke="#D8D8D8" stroke-width="0.25">KiotViet</text></svg>
<div class="abs" style="left:1072.7px;top:599.9px;width:39.3px;height:19.4px;border-radius:3.5px;background:#D6BFC1"></div>
<div class="t" style="left:1075.9px;top:604.43px;font-size:10.6px;color:#A8112A;-webkit-text-stroke:0.2px #A8112A">Đã hủy</div>
<div class="abs" style="left:359.8px;top:654.5px;width:12.8px;height:12.8px;border:1px solid #7A7F86;border-radius:2.5px"></div>
<div class="t" style="left:387.8px;top:652.89px;font-size:12.3px;color:#131313">BK-2-</div>
<div class="t" style="left:387.8px;top:669.29px;font-size:12.3px;color:#131313;letter-spacing:-0.5px">0NNRE71BDB51184X1</div>
<div class="t" style="left:387.8px;top:685.69px;font-size:12.3px;color:#131313">AY3</div>
<div class="t" style="left:526px;top:652.89px;font-size:12.3px;color:#131313">13/10/2025 11:34</div>
<div class="t" style="left:659.2px;top:652.89px;font-size:12.3px;color:#131313">HD002262</div>
<div class="t" style="left:797.6px;top:652.89px;font-size:12.3px;color:#131313">Khách lẻ</div>
<div class="t" style="left:926.2px;top:653.89px;font-size:12.3px;color:#131313;letter-spacing:-0.7px">GRAB</div>
<svg class="abs" style="left:966.3px;top:651.1px" width="58" height="14" viewBox="0 0 58 14"><path d="M0.3,0.2 L17,0.2 L17,13.3 L3,13.3 L3,2.8 Z" fill="#063C86"/><path d="M17,0.2 L55.8,0.2 Q57.5,0.2 57.5,1.8 L57.5,11.7 Q57.5,13.3 55.8,13.3 L17,13.3 Z" fill="#0B8422"/><path d="M6.2,7.4 L8.6,9.6 L13,3.8" fill="none" stroke="#D8D8D8" stroke-width="1.6"/><text x="20.6" y="10.6" font-family="Liberation Sans" font-weight="bold" font-size="9" fill="#D8D8D8" stroke="#D8D8D8" stroke-width="0.25">KiotViet</text></svg>
<div class="abs" style="left:1072.7px;top:650.6999999999999px;width:85px;height:19.4px;border-radius:3.5px;background:#BBCCBF"></div>
<div class="t" style="left:1075.9px;top:655.23px;font-size:10.6px;color:#1D7A3A;-webkit-text-stroke:0.2px #1D7A3A">Giao thành công</div>
<svg class="abs" style="left:1168.4px;top:652.0px" width="15" height="15" viewBox="0 0 15 15"><circle cx="7" cy="7" r="6" fill="none" stroke="#1A1A1A" stroke-width="1.1"/><circle cx="7" cy="4.1" r="0.9" fill="#1A1A1A"/><path d="M5.6,6.1 L7.6,6.1 L7.6,10.2 M5.6,10.4 L9,10.4" fill="none" stroke="#1A1A1A" stroke-width="1.2"/></svg>
<div class="abs" style="left:359.8px;top:722.7px;width:12.8px;height:12.8px;border:1px solid #7A7F86;border-radius:2.5px"></div>
<div class="t" style="left:387.8px;top:721.09px;font-size:12.3px;color:#131313;letter-spacing:1.45px">---</div>
<div class="t" style="left:526px;top:721.09px;font-size:12.3px;color:#131313">13/10/2025 11:02</div>
<div class="t" style="left:659.2px;top:721.09px;font-size:12.3px;color:#131313">HD002260.02</div>
<div class="t" style="left:797.6px;top:721.09px;font-size:12.3px;color:#131313">Khách lẻ</div>
<div class="t" style="left:926.2px;top:722.09px;font-size:12.3px;color:#131313">AhaMove</div>
<svg class="abs" style="left:986.8px;top:719.3000000000001px" width="58" height="14" viewBox="0 0 58 14"><path d="M0.3,0.2 L17,0.2 L17,13.3 L3,13.3 L3,2.8 Z" fill="#063C86"/><path d="M17,0.2 L55.8,0.2 Q57.5,0.2 57.5,1.8 L57.5,11.7 Q57.5,13.3 55.8,13.3 L17,13.3 Z" fill="#0B8422"/><path d="M6.2,7.4 L8.6,9.6 L13,3.8" fill="none" stroke="#D8D8D8" stroke-width="1.6"/><text x="20.6" y="10.6" font-family="Liberation Sans" font-weight="bold" font-size="9" fill="#D8D8D8" stroke="#D8D8D8" stroke-width="0.25">KiotViet</text></svg>
<div class="abs" style="left:1072.7px;top:718.9px;width:51px;height:19.4px;border-radius:3.5px;background:#D9CBBB"></div>
<div class="t" style="left:1075.9px;top:723.43px;font-size:10.6px;color:#B0560C;-webkit-text-stroke:0.2px #B0560C">Chờ xử lý</div>
<div class="abs" style="left:359.8px;top:759.4000000000001px;width:12.8px;height:12.8px;border:1px solid #7A7F86;border-radius:2.5px"></div>
<div class="t" style="left:387.8px;top:757.79px;font-size:12.3px;color:#131313;letter-spacing:1.45px">---</div>
<div class="t" style="left:526px;top:757.79px;font-size:12.3px;color:#131313">13/10/2025 11:02</div>
<div class="t" style="left:659.2px;top:757.79px;font-size:12.3px;color:#131313">HD002260.02</div>
<div class="t" style="left:797.6px;top:757.79px;font-size:12.3px;color:#131313">Khách lẻ</div>
<div class="t" style="left:926.2px;top:758.79px;font-size:12.3px;color:#131313">AhaMove</div>
<svg class="abs" style="left:986.8px;top:756.0000000000001px" width="58" height="14" viewBox="0 0 58 14"><path d="M0.3,0.2 L17,0.2 L17,13.3 L3,13.3 L3,2.8 Z" fill="#063C86"/><path d="M17,0.2 L55.8,0.2 Q57.5,0.2 57.5,1.8 L57.5,11.7 Q57.5,13.3 55.8,13.3 L17,13.3 Z" fill="#0B8422"/><path d="M6.2,7.4 L8.6,9.6 L13,3.8" fill="none" stroke="#D8D8D8" stroke-width="1.6"/><text x="20.6" y="10.6" font-family="Liberation Sans" font-weight="bold" font-size="9" fill="#D8D8D8" stroke="#D8D8D8" stroke-width="0.25">KiotViet</text></svg>
<div class="abs" style="left:1072.7px;top:755.6px;width:39.3px;height:19.4px;border-radius:3.5px;background:#D6BFC1"></div>
<div class="t" style="left:1075.9px;top:760.13px;font-size:10.6px;color:#A8112A;-webkit-text-stroke:0.2px #A8112A">Đã hủy</div>
<div class="abs" style="left:1460px;top:130px;width:133px;height:658px;background:#C8C9CC"></div>
<div class="abs" style="left:352px;top:780.8px;width:1080px;height:8px;border-radius:4px;background:#959AA1"></div>
<!-- /TABLE -->
<!-- DROPDOWN -->
<div class="abs" style="left:314px;top:81px;width:209px;height:208px;background:#D3D3D3;border-radius:8px;box-shadow:0 4px 20px rgba(0,0,0,0.30);overflow:hidden">
  <div class="abs" style="left:0;top:122.5px;width:209px;height:1px;background:#BDBEC0"></div>
  <div class="abs" style="left:0;top:162px;width:209px;height:39px;background:#FFFFFF"></div>
</div>
<div class="t" style="left:328.6px;top:99.94px;font-size:12px;color:#161616">Đặt hàng</div>
<div class="t" style="left:328.6px;top:139.04px;font-size:12px;color:#161616">Hóa đơn</div>
<div class="t" style="left:328.6px;top:178.04px;font-size:12px;color:#161616">Trả hàng</div>
<div class="t" style="left:328.6px;top:217.14px;font-size:12px;color:#161616">Đối tác giao hàng</div>
<div class="t" style="left:328.6px;top:256.24px;font-size:12px;color:#1B1B1B">Vận đơn</div>

<!-- CHAT -->
<div class="abs" style="left:1486px;top:756.3px;width:100px;height:26.5px;background:#0041C6;border-radius:7px"></div>
<svg class="abs" style="left:1495px;top:762px" width="16" height="15" viewBox="0 0 16 15">
<path d="M8,1.2 C4.3,1.2 1.4,3.6 1.4,6.6 C1.4,8.1 2.1,9.4 3.2,10.4 L2.2,13.6 L5.6,11.8 C6.4,12 7.2,12.1 8,12.1 C11.7,12.1 14.6,9.7 14.6,6.6 C14.6,3.6 11.7,1.2 8,1.2 Z" fill="none" stroke="#D3D3D3" stroke-width="1.7"/>
<circle cx="5.2" cy="6.7" r="0.9" fill="#D3D3D3"/><circle cx="8" cy="6.7" r="0.9" fill="#D3D3D3"/><circle cx="10.8" cy="6.7" r="0.9" fill="#D3D3D3"/>
</svg>
<div class="t" style="left:1515.3px;top:764.0px;font-size:12.4px;font-weight:bold;color:#D8D8D8">1900 6522</div>

</body>
</html>
